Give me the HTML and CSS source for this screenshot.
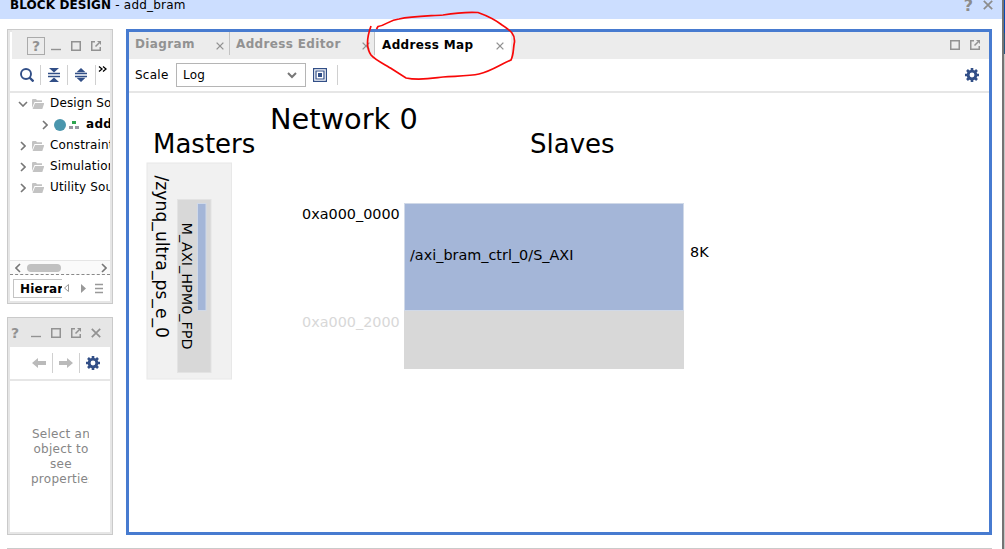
FILE: index.html
```html
<!DOCTYPE html>
<html lang="en">
<head>
<meta charset="utf-8">
<title>Block Design - add_bram</title>
<link rel="stylesheet" href="styles.css">
</head>
<body>
<svg class="defs" width="0" height="0">
  <defs>
    <symbol id="min" viewBox="0 0 10 10"><path d="M0 8h10v1H0z" fill="currentColor" stroke="currentColor" stroke-width=".4"/></symbol>
    <symbol id="max" viewBox="0 0 10 10"><path d="M.75 .75h8.500v8.500h-8.500z" fill="none" stroke="currentColor" stroke-width="1.500"/></symbol>
    <symbol id="float" viewBox="0 0 10 10"><path d="M4 .75H.75v8.500h8.500V6M4.500 5.500L8 2" fill="none" stroke="currentColor" stroke-width="1.500"/><path d="M6 0H10v4z" fill="currentColor"/></symbol>
    <symbol id="close" viewBox="0 0 10 10"><path d="M.8 .8l8.400 8.400M9.200 .8L.8 9.200" stroke="currentColor" stroke-width="1.700"/></symbol>
    <symbol id="chev" viewBox="0 0 6 10"><path d="M1 1l4 4-4 4" fill="none" stroke="currentColor" stroke-width="1.600"/></symbol>
    <symbol id="folder" viewBox="0 0 12 10"><path d="M0 9V1q0-1 1-1h3l1 1.300h5V3H2.500L0 9zM3 4h9v1L10.300 10H.6z" fill="currentColor"/></symbol>
    <symbol id="gear" viewBox="0 0 14 14"><circle cx="7" cy="7" r="3.900" fill="none" stroke="currentColor" stroke-width="2.900"/><path d="M7 0v2.500M7 11.500V14M0 7h2.500M11.500 7H14M2 2l2 2M10 10l2 2M12 2l-2 2M4 10l-2 2" stroke="currentColor" stroke-width="2.600"/></symbol>
    <symbol id="arrow" viewBox="0 0 14 10"><path d="M0 5l6-5v3h8v4H6v3z" fill="currentColor"/></symbol>
  </defs>
</svg>
<div class="app">
  <header class="titlebar"><span class="title"><b>BLOCK DESIGN</b> <span class="sub">- add_bram</span></span>
    <span class="title-icons"><span class="qm big">?</span><svg width="10" height="10"><use href="#close"/></svg></span></header>
  <div class="work">
    <aside class="side">
      <section class="panel sources">
        <div class="panel-head"><span class="qm boxed">?</span><svg width="10" height="10"><use href="#min"/></svg><svg width="10" height="10"><use href="#max"/></svg><svg width="10" height="10"><use href="#float"/></svg></div>
        <div class="tools">
          <svg width="14" height="14" viewBox="0 0 14 14"><circle cx="6" cy="6" r="5" fill="none" stroke="currentColor" stroke-width="1.900"/><path d="M9.500 9.500l4 4" stroke="currentColor" stroke-width="2.400"/></svg>
          <i class="sep"></i>
          <svg width="12" height="14" viewBox="0 0 12 14"><path d="M1 0h10L6 4.500zM1 14h10L6 9.500z" fill="currentColor"/><path d="M0 5.500h12M0 8.500h12" stroke="currentColor" stroke-width="1.500"/></svg>
          <i class="sep"></i>
          <svg width="12" height="14" viewBox="0 0 12 14"><path d="M1.500 4.200h9L6 0zM1.500 9.800h9L6 14z" fill="currentColor"/><path d="M0 5.500h12M0 8.500h12" stroke="currentColor" stroke-width="1.500"/></svg>
          <i class="sep last"></i>
          <svg class="more" width="9" height="6" viewBox="0 0 9 6"><path d="M1 .5l3 2.500-3 2.500M5 .5l3 2.500-3 2.500" fill="none" stroke="#000" stroke-width="1.300"/></svg>
        </div>
        <ul class="tree">
          <li><svg class="tw open" width="6" height="10"><use href="#chev"/></svg><svg class="folder" width="12" height="10"><use href="#folder"/></svg><span>Design Sources</span></li>
          <li class="child"><svg class="tw" width="6" height="10"><use href="#chev"/></svg><i class="dot"></i><svg class="hier" width="10" height="8" viewBox="0 0 10 8"><path d="M3 0h4v3H3z" fill="#2fa550"/><path d="M0 5h4v3H0zM6 5h4v3H6z" fill="#9696a0"/></svg><b>add_bram</b></li>
          <li><svg class="tw" width="6" height="10"><use href="#chev"/></svg><svg class="folder" width="12" height="10"><use href="#folder"/></svg><span>Constraints</span></li>
          <li><svg class="tw" width="6" height="10"><use href="#chev"/></svg><svg class="folder" width="12" height="10"><use href="#folder"/></svg><span>Simulation</span></li>
          <li><svg class="tw" width="6" height="10"><use href="#chev"/></svg><svg class="folder" width="12" height="10"><use href="#folder"/></svg><span>Utility Sources</span></li>
        </ul>
        <div class="scroll"><svg class="flip" width="6" height="10"><use href="#chev"/></svg><i class="thumb"></i><svg class="right" width="6" height="10"><use href="#chev"/></svg></div>
        <div class="bottom-tabs"><b class="htab">Hierarchy</b><svg width="38" height="11" viewBox="0 0 38 11"><path d="M4.500 1.500v7L.5 5z" fill="none" stroke="#999"/><path d="M17 1v9l5-4.500z" fill="#999"/><path d="M31 1.500h8M31 5.500h8M31 9.500h8" stroke="#999" stroke-width="1.500"/></svg></div>
      </section>
      <section class="panel props">
        <div class="panel-head"><span class="qm">?</span><svg width="10" height="10"><use href="#min"/></svg><svg width="10" height="10"><use href="#max"/></svg><svg width="10" height="10"><use href="#float"/></svg><svg width="10" height="10"><use href="#close"/></svg></div>
        <div class="tools nav"><svg class="gray" width="14" height="10"><use href="#arrow"/></svg><i class="sep"></i><svg class="gray flip" width="14" height="10"><use href="#arrow"/></svg><i class="sep"></i><svg width="14" height="14"><use href="#gear"/></svg></div>
        <div class="empty"><div>Select an</div><div>object to</div><div>see</div><div>properties</div></div>
      </section>
    </aside>
    <main class="main">
      <nav class="tabs">
        <div class="tab t1"><b>Diagram</b><svg width="8" height="8"><use href="#close"/></svg></div>
        <div class="tab t2"><b>Address Editor</b><svg width="8" height="8"><use href="#close"/></svg></div>
        <div class="tab active"><b>Address Map</b><svg width="8" height="8"><use href="#close"/></svg></div>
        <div class="tab-icons"><svg width="10" height="10"><use href="#max"/></svg><svg width="10" height="10"><use href="#float"/></svg></div>
      </nav>
      <div class="bar"><span class="label">Scale</span>
        <div class="select"><span>Log</span><svg width="10" height="7" viewBox="0 0 10 7"><path d="M1 1l4 4 4-4" fill="none" stroke="#777" stroke-width="2"/></svg></div>
        <svg class="fit" width="14" height="14" viewBox="0 0 14 14"><path d="M.6 .6h12.800v12.800H.6zM3 3h8v8H3z" fill="none" stroke="currentColor" stroke-width="1.200"/><path d="M5 5h4v4H5z" fill="currentColor"/></svg>
        <i class="sep"></i><svg class="gear" width="14" height="14"><use href="#gear"/></svg></div>
      <svg class="map" width="860" height="439" viewBox="129 93 860 439">
        <text x="270" y="129" font-size="28.800">Network 0</text>
        <text x="153" y="153" font-size="26">Masters</text>
        <text x="530" y="153" font-size="26">Slaves</text>
        <rect x="147" y="163" width="84.500" height="216" fill="#f1f1f1" stroke="#e8e8e8"/>
        <rect x="177.500" y="199.500" width="33.500" height="173" fill="#d8d8d8" stroke="#e3e3e3"/>
        <rect x="197.500" y="203.500" width="8.500" height="107" fill="#a4b6d8" stroke="#d0d9e8"/>
        <text transform="translate(155.700 175.500) rotate(90)" font-size="17.200">/zynq_ultra_ps_e_0</text>
        <text transform="translate(182 222.500) rotate(90)" font-size="14.400">M_AXI_HPM0_FPD</text>
        <rect x="404" y="310" width="280" height="59" fill="#d8d8d8"/>
        <rect x="404.500" y="203.500" width="279" height="107" fill="#a4b6d8" stroke="#d0d9e8"/>
        <text x="302" y="219" font-size="14.400">0xa000_0000</text>
        <text x="302" y="327" font-size="14.400" fill="#d8d8d8">0xa000_2000</text>
        <text x="410" y="260" font-size="14.400">/axi_bram_ctrl_0/S_AXI</text>
        <text x="690" y="257" font-size="14.400">8K</text>
      </svg>
    </main>
  </div>
  <div class="edge"></div>
  <svg class="mark" width="154" height="74" viewBox="364 9 154 74"><path d="M371 26C367 37 366 48 371 55C375 60 386 65 392 69L406 78C420 81 434 78 443 77C458 76 470 76 479 74C492 71 499 65 511 60C514 54 513 48 514.500 42C515 34 511 31 502 25C493 18 485 15 478 12.500C468 12 455 13 443 15C430 16 412 16 399 19C389 20 387 25 378 26.500L376.500 29" fill="none" stroke="#f80808" stroke-width="1.700"/></svg>
</div>
</body>
</html>
```

FILE: styles.css
```css
* { box-sizing: border-box; }
body { margin: 0; background: #fff; color: #000; font: 12px/15px "DejaVu Sans", sans-serif; letter-spacing: .25px; }
svg { display: block; flex: none; }
i { flex: none; }
.defs { position: absolute; }
.app { position: relative; width: 1005px; height: 549px; overflow: hidden; }
.titlebar { height: 19px; width: 1002px; background: #ccdeff; display: flex; justify-content: space-between; padding: 0 9px 0 10px; }
.title { margin-top: -2px; white-space: pre; }
.title b { letter-spacing: .1px; }
.sub { letter-spacing: .2px; }
.title-icons { display: flex; gap: 9px; color: #8c8c8c; }
.qm { font-weight: bold; font-size: 14px; letter-spacing: 0; color: #929292; }
.qm.big { font-size: 16px; line-height: 11px; color: #8c8c8c; margin-right: 1px; }
.work { display: flex; gap: 13px; margin: 10px 0 0 7px; width: 985px; height: 520px; padding-bottom: 13px; border-bottom: 1px solid #cacaca; }
.side { width: 106px; display: flex; flex-direction: column; gap: 13px; }
.panel { border: 1px solid #cacaca; box-shadow: inset 0 0 0 2px #e6e6e6; padding: 0 2px 2px; overflow: hidden; display: flex; flex-direction: column; }
.sources { height: 275px; }
.props { height: 218px; }
.panel-head { height: 29px; margin-left: 2px; background: #ececec; display: flex; align-items: center; gap: 10px; color: #929292; flex: none; padding: 2px 0 0 15px; }
.props .panel-head { background: #e6e6e6; margin: 0 -2px; padding: 1px 0 0 3px; }
.props .qm { width: 10px; margin: 0; }
.boxed { width: 18px; height: 18px; border: 1px solid #aaa; text-align: center; line-height: 17px; margin-right: -4px; }
.tools { height: 34px; border-bottom: 2px solid #e6e6e6; display: flex; align-items: center; color: #324f87; padding-left: 10px; flex: none; gap: 7px; }
.sep { width: 1px; height: 20px; background: #d0d0d0; }
.sep.last { margin-left: 1px; }
.sources .sep:nth-of-type(1) { margin-left: -1px; }
.more { margin: -12px 0 0 -5px; }
.nav { padding-left: 22px; gap: 6px; }
.gray { color: #bababa; }
.flip { transform: scaleX(-1); }
.tree { list-style: none; margin: 0; padding: 0; height: 168px; overflow: hidden; width: 100px; }
.tree li { height: 21px; display: flex; align-items: center; padding-left: 10px; white-space: nowrap; letter-spacing: .15px; }
.tree li > span { margin-top: -1px; }
.tree .child { padding-left: 32px; }
.tree b { letter-spacing: .3px; margin-top: -1px; }
.tw { margin-right: 6px; color: #777; }
.open { transform: rotate(90deg); }
.folder { color: #c3c3c3; margin-right: 6px; }
.dot { width: 12px; height: 12px; border-radius: 50%; background: #4a96ad; margin-right: 3px; }
.hier { margin-right: 7px; }
.scroll { height: 15px; border-top: 1px solid #e5e5e5; border-bottom: 1px dashed #888; background: #fafafa; display: flex; align-items: center; padding: 0 3px 0 5px; color: #777; }
.thumb { width: 34px; height: 8px; border-radius: 4px; background: #c1c1c1; margin-left: 6px; }
.right { margin-left: auto; }
.bottom-tabs { display: flex; align-items: center; padding-left: 3px; height: 26px; }
.htab { width: 49px; height: 19px; border: 1px solid #c4c4c4; border-right: 0; padding-left: 6px; line-height: 18px; overflow: hidden; letter-spacing: .2px; }
.bottom-tabs svg { margin-left: 2px; overflow: visible; }
.empty { color: #868686; width: 60px; margin: 46px 0 0 21px; text-align: center; overflow: hidden; white-space: nowrap; }
.empty div { width: 60px; overflow: hidden; }
.empty div:first-child { text-align: left; padding-left: 1px; width: 58px; }
.empty div:last-child { text-align: left; width: 58px; }
.main { width: 866px; height: 506px; border: 3px solid #477bd0; display: flex; flex-direction: column; }
.tabs { height: 27px; background: #ececec; display: flex; color: #929292; flex: none; }
.tab { display: flex; align-items: center; justify-content: space-between; padding: 0 5px 0 6px; letter-spacing: .35px; }
.tab b { margin-top: -1px; }
.tab svg { margin-top: 1px; }
.tab:not(.active) { border-right: 1px solid #c3c3c3; height: 23px; padding-top: 3px; }
.t1 { width: 101px; }
.t2 { width: 145px; padding-right: 4px; }
.active { width: 136px; background: #fff; padding: 0 7px 0 7px; margin-right: auto; }
.active b { color: #000; }
.tab-icons { display: flex; align-items: center; gap: 10px; padding-right: 9px; }
.tab-icons svg { margin-top: -1px; }
.bar { height: 34px; border-bottom: 2px solid #e6e6e6; display: flex; align-items: center; padding: 0 10px 0 6px; color: #324f87; flex: none; }
.label { color: #000; width: 41px; }
.select { width: 130px; height: 24px; border: 1px solid #b5b5b5; display: flex; justify-content: space-between; align-items: center; padding: 0 8px 0 6px; color: #000; }
.fit { margin: 0 10px 0 7px; }
.gear { margin-left: auto; }
.map { font-family: "DejaVu Sans", sans-serif; letter-spacing: 0; }
.edge { position: absolute; right: 0; top: 0; width: 3px; height: 549px; background: linear-gradient(90deg, #747474 0 2px, transparent 2px), linear-gradient(#084ab5 0 33px, #255781 33px 54px, #c6c6c6 54px); }
.mark { position: absolute; left: 364px; top: 9px; pointer-events: none; }
```
